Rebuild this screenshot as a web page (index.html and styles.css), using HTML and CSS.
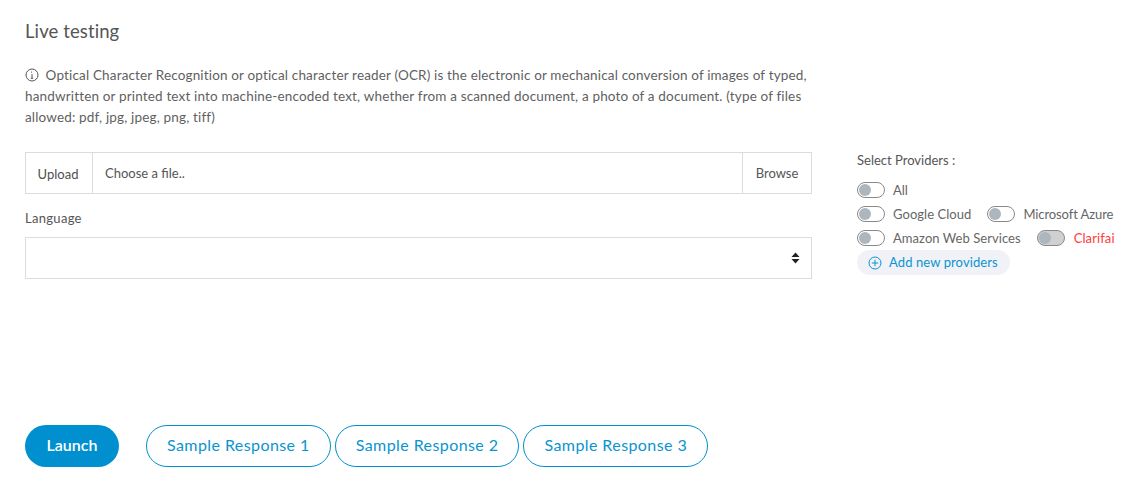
FILE: index.html
```html
<!DOCTYPE html>
<html>
<head>
    <meta charset="UTF-8">
    <title>Live testing</title>
    <link rel="stylesheet" href="styles.css">
</head>
<body>
    <h1 class="title">Live testing</h1>
    <p class="intro">
        <svg class="info-icon" width="14" height="14" viewBox="0 0 14 14"><circle cx="7" cy="7" r="6" fill="none" stroke="#555" stroke-width="1"/><path d="M7 6v4.2M5.8 10.3h2.4M6 4.1h1" fill="none" stroke="#555" stroke-width="1"/></svg>
        Optical Character Recognition or optical character reader (OCR) is the electronic or mechanical conversion of images of typed, handwritten or printed text into machine-encoded text, whether from a scanned document, a photo of a document. (type of files allowed: pdf, jpg, jpeg, png, tiff)
    </p>

    <div class="main-row">
        <div class="form-col">
            <div class="file-input">
                <span class="file-upload">Upload</span>
                <span class="file-name">Choose a file..</span>
                <span class="file-browse">Browse</span>
            </div>
            <label class="field-label">Language</label>
            <div class="select-box">
                <svg width="9" height="12" viewBox="0 0 9 12"><path d="M4.5 0.5L8.5 5H0.5zM4.5 11.5L0.5 7H8.5z" fill="#222"/></svg>
            </div>
        </div>

        <div class="providers">
            <div class="providers-title">Select Providers :</div>
            <div class="provider-row">
                <span class="switch"></span><span class="provider-name">All</span>
            </div>
            <div class="provider-row">
                <span class="switch"></span><span class="provider-name">Google Cloud</span>
                <span class="switch"></span><span class="provider-name">Microsoft Azure</span>
            </div>
            <div class="provider-row">
                <span class="switch"></span><span class="provider-name">Amazon Web Services</span>
                <span class="switch disabled"></span><span class="provider-name red">Clarifai</span>
            </div>
            <button class="add-provider">
                <svg width="14" height="14" viewBox="0 0 14 14"><circle cx="7" cy="7" r="6" fill="none" stroke="#0a94d0" stroke-width="1"/><path d="M7 3.8v6.4M3.8 7h6.4" stroke="#0a94d0" stroke-width="1"/></svg>
                Add new providers
            </button>
        </div>
    </div>

    <div class="actions">
        <button class="launch">Launch</button>
        <div class="samples">
            <button class="sample">Sample Response 1</button>
            <button class="sample">Sample Response 2</button>
            <button class="sample">Sample Response 3</button>
        </div>
    </div>
</body>
</html>
```

FILE: styles.css
```css
body { margin: 0; padding: 0 25px; height: 489px; box-sizing: border-box; overflow: hidden; background: white; color: #555; font-family: Lato, "Open Sans", sans-serif; font-size: 13px; }
.title { margin: 0; padding-top: 20px; font-size: 18.5px; line-height: 22px; font-weight: 400; letter-spacing: .1px; color: #555; }
.intro { margin: 23px 0 0; width: 790px; line-height: 21px; font-size: 13.5px; letter-spacing: .16px; color: #5f5f5f; }
.info-icon { vertical-align: -2px; margin-right: 3px; }

.main-row { display: flex; margin-top: 24px; }
.form-col { width: 787px; flex: none; }
.file-input { display: flex; height: 42px; box-sizing: border-box; border: 1px solid #dcdcdc; align-items: center; }
.file-upload { width: 67px; height: 100%; display: flex; align-items: center; justify-content: center; border-right: 1px solid #dcdcdc; color: #4f4f4f; padding: 2px 2px 0 0; box-sizing: border-box; }
.file-name { flex: 1; padding-left: 12px; color: #555; }
.file-browse { width: 68px; height: 100%; display: flex; align-items: center; justify-content: center; border-left: 1px solid #dcdcdc; color: #555; }
.field-label { display: block; margin-top: 16px; line-height: 16px; letter-spacing: .3px; }
.select-box { display: flex; align-items: center; justify-content: flex-end; height: 42px; box-sizing: border-box; margin-top: 11px; padding-right: 12px; border: 1px solid #dcdcdc; }
.select-box svg { margin-right: -1px; }

.providers { margin-left: 45px; white-space: nowrap; }
.providers-title { line-height: 16px; margin-bottom: 10px; }
.provider-row { display: flex; align-items: center; height: 24px; }
.switch { width: 28px; height: 16px; box-sizing: border-box; border: 1px solid #8a8a8a; border-radius: 8px; background: white; position: relative; margin-right: 8px; }
.switch::before { content: ""; position: absolute; left: 1px; top: 1px; width: 12px; height: 12px; border-radius: 50%; background: #adb5bd; }
.switch.disabled { background: #d0d0d0; }
.provider-name { margin-right: 16px; color: #666; letter-spacing: .05px; }
.provider-name:last-child { letter-spacing: -.1px; }
.provider-name.red { color: #ff3b3b; margin: 0 0 0 1px; letter-spacing: .1px; }
.add-provider { display: flex; align-items: center; gap: 7px; height: 25px; padding: 0 12px 0 11px; border: none; border-radius: 13px; background: #f0f2f7; color: #0a94d0; font: inherit; letter-spacing: .1px; line-height: 23px; }

.actions { display: flex; align-items: center; margin-top: 146px; }
.launch { width: 94px; height: 42px; padding: 0 0 3px; border: none; border-radius: 21px; background: #0090d0; color: white; font: 600 16px Lato, sans-serif; }
.samples { display: flex; gap: 4px; margin-left: 27px; }
.sample { height: 42px; padding: 0 20px 3px; border: 1px solid #0090d0; border-radius: 21px; background: white; color: #0a94d0; font: 16px Lato, sans-serif; letter-spacing: .42px; }
```
